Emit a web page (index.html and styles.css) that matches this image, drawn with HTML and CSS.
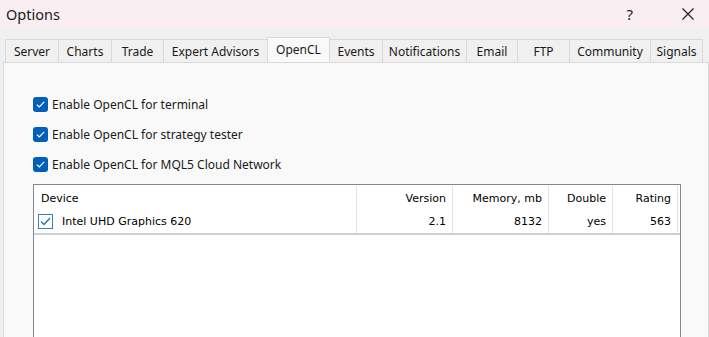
FILE: index.html
```html
<!DOCTYPE html>
<html lang="en">
<head>
  <meta charset="UTF-8" />
  <title>Options</title>
  <link rel="stylesheet" href="styles.css">
</head>
<body>

  <div class="titlebar">
    <span class="title">Options</span>
    <span class="help">?</span>
    <svg class="close" width="12" height="12" viewBox="0 0 12 12">
      <path d="M0.5 0.5 L11.5 11.5 M11.5 0.5 L0.5 11.5" stroke="#1a1a1a" stroke-width="1.1" fill="none"/>
    </svg>
  </div>

  <div class="tabs">
    <div class="tab">Server</div>
    <div class="tab">Charts</div>
    <div class="tab">Trade</div>
    <div class="tab">Expert Advisors</div>
    <div class="tab active">OpenCL</div>
    <div class="tab">Events</div>
    <div class="tab">Notifications</div>
    <div class="tab">Email</div>
    <div class="tab">FTP</div>
    <div class="tab">Community</div>
    <div class="tab">Signals</div>
  </div>

  <div class="panel">
    <label class="check-row"><span class="check"><svg width="9" height="7" viewBox="0 0 9 7"><path d="M0.8 3.6 L3.3 6 L8.2 0.9" stroke="#fff" stroke-width="1.2" fill="none"/></svg></span>Enable OpenCL for terminal</label>
    <label class="check-row"><span class="check"><svg width="9" height="7" viewBox="0 0 9 7"><path d="M0.8 3.6 L3.3 6 L8.2 0.9" stroke="#fff" stroke-width="1.2" fill="none"/></svg></span>Enable OpenCL for strategy tester</label>
    <label class="check-row"><span class="check"><svg width="9" height="7" viewBox="0 0 9 7"><path d="M0.8 3.6 L3.3 6 L8.2 0.9" stroke="#fff" stroke-width="1.2" fill="none"/></svg></span>Enable OpenCL for MQL5 Cloud Network</label>

    <div class="devices">
      <div class="dev-row head">
        <div class="cell left">Device</div>
        <div class="cell">Version</div>
        <div class="cell">Memory, mb</div>
        <div class="cell">Double</div>
        <div class="cell">Rating</div>
      </div>
      <div class="dev-row item">
        <div class="cell left">
          <span class="row-check"><svg width="11" height="9" viewBox="0 0 11 9"><path d="M1 4.5 L4 7.5 L10 1" stroke="#2a6fb0" stroke-width="1.3" fill="none"/></svg></span>
          Intel UHD Graphics 620
        </div>
        <div class="cell">2.1</div>
        <div class="cell">8132</div>
        <div class="cell">yes</div>
        <div class="cell">563</div>
      </div>
    </div>
  </div>

</body>
</html>
```

FILE: styles.css
```css
* {
  box-sizing: border-box;
}

body {
  margin: 0;
  width: 709px;
  height: 337px;
  overflow: hidden;
  background: #f0f0f0;
  color: #1a1a1a;
  font-family: 'Noto Sans', 'Open Sans', sans-serif;
}

.titlebar {
  height: 28px;
  background: #f9eff2;
  display: flex;
  align-items: center;
}

.title {
  font-size: 14.5px;
  padding-left: 6px;
  flex: 1;
}

.help {
  font-size: 15px;
  margin-right: 49px;
}

.close {
  margin-right: 15px;
}

.tabs {
  margin-top: 9px;
  padding-left: 5px;
  height: 25px;
  display: grid;
  grid-template-columns: 53px 53px 52px 104px 62px 53px 84px 51px 52px 81px 53px;
  align-items: end;
}

.tab {
  height: 23px;
  border: 1px solid #d9d9d9;
  border-bottom: none;
  border-right: none;
  background: #f0f0f0;
  font-size: 12px;
  display: flex;
  align-items: center;
  justify-content: center;
}

.tab:last-child {
  border-right: 1px solid #d9d9d9;
}

.tab.active {
  height: 25px;
  background: #f9f9f9;
  border-right: 1px solid #d9d9d9;
  margin-right: -1px;
  position: relative;
  z-index: 1;
  padding-bottom: 2px;
}

.panel {
  margin-left: 3px;
  height: 277px;
  overflow: hidden;
  background: #f9f9f9;
  border: 1px solid #dadada;
  padding: 26px 0 0 29px;
}

.check-row {
  display: flex;
  align-items: center;
  height: 30px;
  font-size: 12px;
}

.check {
  width: 15px;
  height: 15px;
  border-radius: 3px;
  background: #005fb8;
  display: flex;
  align-items: center;
  justify-content: center;
  margin-right: 4px;
}

.devices {
  margin-top: 5px;
  width: 648px;
  height: 200px;
  background: #fff;
  border: 1px solid #828790;
  font-family: 'DejaVu Sans', sans-serif;
  font-size: 11px;
  color: #000;
}

.dev-row {
  display: grid;
  grid-template-columns: 323px 96px 96px 64px 65px;
  height: 25px;
  padding-top: 1px;
}

.dev-row.item {
  border-bottom: 2px solid #cfcfcf;
  height: 25px;
  padding-top: 0;
}

.cell {
  display: flex;
  align-items: center;
  justify-content: flex-end;
  padding-right: 6px;
  border-right: 1px solid #e3e3e3;
}

.cell.left {
  justify-content: flex-start;
  padding-left: 7px;
}

.item .cell.left {
  padding-left: 4px;
}

.row-check {
  width: 15px;
  height: 15px;
  border: 1px solid #3c7fb1;
  display: flex;
  align-items: center;
  justify-content: center;
  margin-right: 9px;
}
```
